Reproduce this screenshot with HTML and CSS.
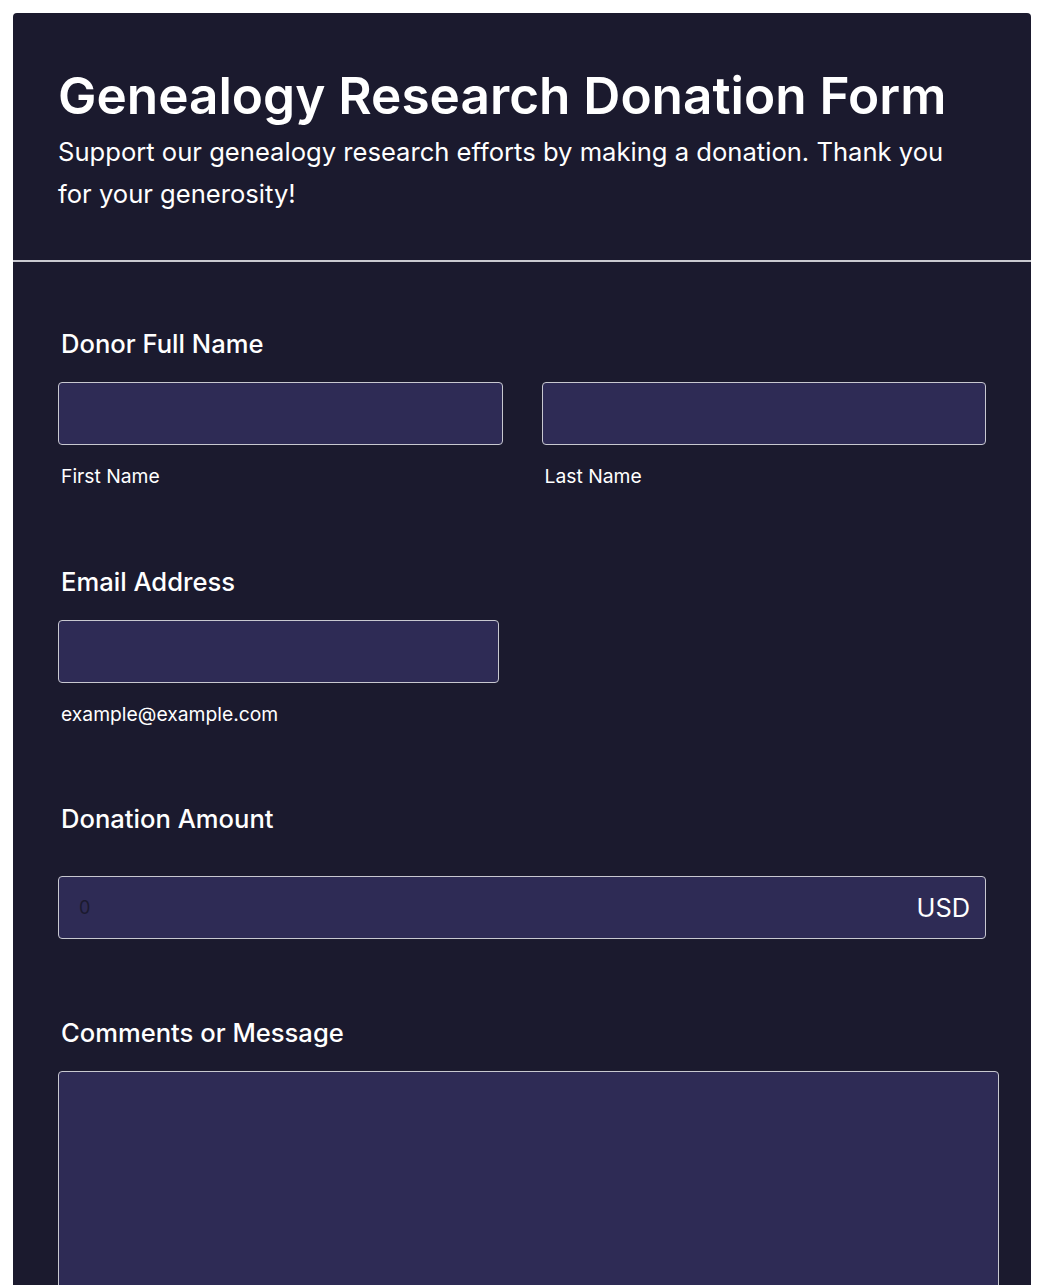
FILE: index.html
```html
<!DOCTYPE html>
<html lang="en">
<head>
    <meta charset="UTF-8">
    <meta name="viewport" content="width=device-width, initial-scale=1.0">
    <title>Genealogy Research Donation Form</title>
    <link rel="stylesheet" href="styles.css">
</head>
<body>
    <div class="form-card">
        <!-- Form heading -->
        <div class="form-header">
            <h1 class="form-title">Genealogy Research Donation Form</h1>
            <p class="form-subtitle">Support our genealogy research efforts by making a donation. Thank you for your generosity!</p>
        </div>

        <form class="form-body">
            <!-- Donor name -->
            <div class="field field-name">
                <label class="field-label">Donor Full Name</label>
                <div class="name-row">
                    <div class="name-col">
                        <input type="text" id="first-name" class="text-input">
                        <label for="first-name" class="sub-label">First Name</label>
                    </div>
                    <div class="name-col">
                        <input type="text" id="last-name" class="text-input">
                        <label for="last-name" class="sub-label">Last Name</label>
                    </div>
                </div>
            </div>

            <!-- Email -->
            <div class="field">
                <label for="email" class="field-label">Email Address</label>
                <div class="email-col">
                    <input type="email" id="email" class="text-input">
                    <label for="email" class="sub-label">example@example.com</label>
                </div>
            </div>

            <!-- Amount -->
            <div class="field field-amount">
                <label for="amount" class="field-label">Donation Amount</label>
                <div class="amount-box">
                    <input type="text" id="amount" class="amount-input" placeholder="0">
                    <span class="currency">USD</span>
                </div>
            </div>

            <!-- Comments -->
            <div class="field">
                <label for="comments" class="field-label">Comments or Message</label>
                <textarea id="comments" class="text-area"></textarea>
            </div>
        </form>
    </div>
</body>
</html>
```

FILE: styles.css
```css
/* Basic styling */
body {
    font-family: 'Inter', 'Noto Sans', sans-serif;
    background: #ffffff;
    margin: 0;
    padding: 13px;
    color: #ffffff;
}

.form-card {
    width: 1018px;
    background: #1b1a2e;
    border-radius: 4px;
    overflow: hidden;
}

.form-header {
    padding: 50px 45px 45px;
    border-bottom: 2px solid #c9c9d0;
}

.form-title {
    font-size: 51.3px;
    font-weight: 600;
    line-height: 64px;
    margin: 0 0 4px;
}

.form-subtitle {
    font-size: 25.6px;
    line-height: 42px;
    max-width: 910px;
    margin: 0;
}

.form-body {
    padding: 67px 45px 0;
}

.field {
    margin-bottom: 78px;
}

.field-name {
    margin-bottom: 79px;
}

.field-amount {
    margin-bottom: 79px;
}

.field-label {
    display: block;
    font-size: 25.6px;
    font-weight: 500;
    line-height: 30px;
    padding-left: 3px;
    margin-bottom: 23px;
}

.name-row {
    display: flex;
    gap: 39px;
    width: 928px;
}

.name-col {
    flex: 1;
    display: flex;
    flex-direction: column;
}

.email-col {
    width: 441px;
    display: flex;
    flex-direction: column;
}

.text-input {
    box-sizing: border-box;
    width: 100%;
    height: 63px;
    background: #2e2b55;
    border: 1px solid #c8c8d0;
    border-radius: 4px;
    color: #ffffff;
    font-family: inherit;
    font-size: 20px;
    padding: 0 14px;
}

.sub-label {
    display: block;
    font-size: 19.3px;
    line-height: 24px;
    margin-top: 19px;
    padding-left: 3px;
}

.amount-box {
    box-sizing: border-box;
    display: flex;
    align-items: center;
    width: 928px;
    height: 63px;
    margin-top: 42px;
    background: #2e2b55;
    border: 1px solid #c8c8d0;
    border-radius: 4px;
    padding: 0 15px 0 20px;
}

.amount-input {
    flex: 1;
    background: transparent;
    border: none;
    outline: none;
    color: #ffffff;
    font-family: inherit;
    font-size: 18px;
    padding: 0;
}

.amount-input::placeholder {
    color: #1b1a2e;
}

.currency {
    font-size: 25.4px;
}

.text-area {
    box-sizing: border-box;
    display: block;
    width: 941px;
    height: 320px;
    background: #2e2b55;
    border: 1px solid #c8c8d0;
    border-radius: 4px;
    resize: none;
}
```
